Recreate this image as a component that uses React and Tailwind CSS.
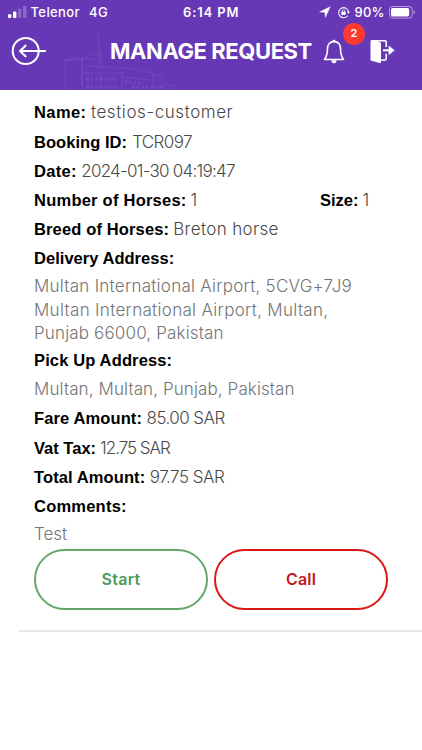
const bookingFields = [
  { label: "Name:", value: "testios-customer", labelClass: "tracking-[0.4px]", valueClass: "ml-[4.5px] tracking-[0.57px]" },
  { label: "Booking ID:", value: "TCR097", labelClass: "tracking-[0.05px]", valueClass: "ml-[5px] tracking-[-0.6px]" },
  { label: "Date:", value: "2024-01-30 04:19:47", labelClass: "tracking-[0.3px]", valueClass: "ml-[4.5px] tracking-[-0.75px]" },
];

const horseFields = [
  { label: "Breed of Horses:", value: "Breton horse", labelClass: "tracking-[0.14px]", valueClass: "ml-1 tracking-[0.35px]" },
  { label: "Delivery Address:", value: "", labelClass: "tracking-[0.03px]" },
];

const amountFields = [
  { label: "Fare Amount:", value: "85.00 SAR", labelClass: "tracking-[0.12px]", valueClass: "ml-[4.5px] tracking-[-0.57px]" },
  { label: "Vat Tax:", value: "12.75 SAR", labelClass: "", valueClass: "ml-1 tracking-[-1.02px]" },
  { label: "Total Amount:", value: "97.75 SAR", labelClass: "tracking-[0.1px]", valueClass: "ml-[4.5px] tracking-[-0.5px]" },
  { label: "Comments:", value: "", labelClass: "tracking-[0.22px]" },
];

const Field = ({ label, value, labelClass = "", valueClass = "ml-1" }) => (
  <div className="flex h-[29.2px] items-baseline leading-[29.2px] whitespace-nowrap">
    <span className={`font-['Liberation_Sans',Arial,sans-serif] text-[16.5px] font-bold text-black ${labelClass}`}>{label}</span>
    {value && <span className={`text-[17px] font-light text-[#484848] ${valueClass}`}>{value}</span>}
  </div>
);

const SignalIcon = () => (
  <svg width="19" height="12" viewBox="0 0 19 12" fill="#fff">
    <rect x="0" y="8.2" width="3.4" height="3.8" rx="0.8" />
    <rect x="5" y="5.6" width="3.4" height="6.4" rx="0.8" />
    <rect x="10" y="2.8" width="3.4" height="9.2" rx="0.8" opacity="0.25" />
    <rect x="15" y="0" width="3.4" height="12" rx="0.8" opacity="0.25" />
  </svg>
);

const LocationIcon = () => (
  <svg width="12" height="12" viewBox="0 0 12 12" fill="#fff">
    <path d="M11.2 0.7 6.4 11.3 5.9 6.3 0.7 5.9Z" stroke="#fff" strokeWidth="0.5" strokeLinejoin="round" />
  </svg>
);

const RotationLockIcon = () => (
  <svg width="13" height="13" viewBox="0 0 13 13" fill="none" stroke="#fff" strokeWidth="1.1">
    <path d="M10.4 10a5 5 0 1 1 1.2-4" strokeLinecap="round" />
    <path d="M9.8 5.8h3.1l-1.5 2.2Z" fill="#fff" stroke="none" />
    <rect x="4.4" y="5.8" width="4.2" height="3.2" rx="0.5" fill="#fff" stroke="none" />
    <path d="M5.2 6V5a1.3 1.3 0 0 1 2.6 0v1" strokeWidth="0.8" />
  </svg>
);

const BatteryIcon = () => (
  <svg width="27" height="13" viewBox="0 0 27 13" fill="none">
    <rect x="0.5" y="0.5" width="22.8" height="11.6" rx="3.2" stroke="#fff" strokeOpacity="0.5" />
    <rect x="2" y="2" width="18.2" height="8.6" rx="1.8" fill="#fff" />
    <path d="M24.6 4.3v4a2.2 2.2 0 0 0 0-4Z" fill="#fff" fillOpacity="0.5" />
  </svg>
);

const StatusBar = () => (
  <div className="relative flex h-6 items-center text-[13px] leading-6 font-medium whitespace-nowrap">
    <div className="flex w-[183px] items-center pl-[7.5px]">
      <SignalIcon />
      <span className="ml-1 tracking-[0.4px]">Telenor</span>
      <span className="ml-[9px] tracking-[0.4px]">4G</span>
    </div>
    <span className="w-[136px] font-semibold tracking-[0.85px]">6:14 PM</span>
    <LocationIcon />
    <span className="ml-[5.5px]"><RotationLockIcon /></span>
    <span className="ml-[5px] w-[34px] tracking-[0.2px]">90%</span>
    <BatteryIcon />
  </div>
);

const Skyline = () => (
  <svg className="absolute bottom-0 left-[60px]" width="130" height="58" viewBox="0 0 130 58" fill="none" stroke="#a78ae0" strokeOpacity="0.22" strokeWidth="0.8">
    <path d="M5 58V28L22 26V58M5 28h17M22 35V27h14v9M38.5 2v34M40.5 12v20M22 26l19-6v17M22 38l5-4 29 2 6 4M22 41h40M22 41v17M62 40v18M56 36h11l26 5v17M62 45l31 3M93 43l9 1v14M102 52l12 2v4M28 41v17M41 41v17" />
    <path d="M26 47h32M64 50h7M73 51h8M72 55h30M26 55h32" strokeWidth="3" strokeDasharray="3 1.5" strokeOpacity="0.18" />
  </svg>
);

const BackIcon = () => (
  <svg width="36" height="30" viewBox="0 0 36 30" fill="none" stroke="#fff" strokeWidth="2" strokeLinecap="round" strokeLinejoin="round">
    <circle cx="14.7" cy="15" r="13" />
    <path d="M34 15H9M14.5 9.7 9 15l5.5 5.3" strokeWidth="2.2" />
  </svg>
);

const BellIcon = () => (
  <svg width="22" height="25" viewBox="0 0 22 25" fill="none" stroke="#fff" strokeWidth="1.6" strokeLinejoin="round">
    <path d="M11 2.6c-4.6 0-6.5 3.2-6.5 7 0 6-.9 8.2-3 10.9h19c-2.1-2.7-3-4.9-3-10.9 0-3.8-1.9-7-6.5-7Z" />
    <path d="M9.5 2.6a1.5 1.5 0 0 1 3 0ZM8.8 21.7h4.4a2.2 2.2 0 0 1-4.4 0Z" fill="#fff" strokeWidth="0.8" />
  </svg>
);

const LogoutIcon = () => (
  <svg width="25" height="25" viewBox="0 0 25 25" fill="none" stroke="#fff">
    <path d="M0.5 2.4Q0.5 1 1.9 1H4.6l5.6 2.2q.8.4.8 1.4v18.4q0 1.4-1.3 1L1.4 21.8Q.5 21.4.5 20.4Z" fill="#fff" stroke="none" />
    <path d="M4 1.8h11q1.2 0 1.2 1.2v5M16.2 14.8v5q0 1.2-1.2 1.2H11" strokeWidth="1.6" />
    <path d="M13 11.3h6.5" strokeWidth="2" />
    <path d="M18.6 6.4 24.6 11.3 18.6 16.2Z" fill="#fff" stroke="none" />
  </svg>
);

const Header = () => (
  <header className="relative h-[90px] bg-[#6638b6] text-white">
    <Skyline />
    <StatusBar />
    <div className="relative flex h-[54px] items-center pl-[11px]">
      <BackIcon />
      <h1 className="ml-[63px] w-[213px] text-[22px] leading-none font-bold tracking-[-0.42px] whitespace-nowrap">MANAGE REQUEST</h1>
      <div className="relative">
        <BellIcon />
        <span className="absolute -top-[16px] left-[20px] flex size-[22px] items-center justify-center rounded-full bg-[#fd3b31] text-[11px] font-semibold">2</span>
      </div>
      <span className="ml-[25px]"><LogoutIcon /></span>
    </div>
  </header>
);

const App = () => (
  <div className="min-h-[750px] w-[422px] bg-white font-['Inter',sans-serif]">
    <Header />
    <main className="px-[34px] pt-[8.4px]">
      {bookingFields.map((field) => (
        <Field key={field.label} {...field} />
      ))}
      <div className="flex">
        <div className="w-[286px]">
          <Field label="Number of Horses:" value="1" labelClass="tracking-[0.24px]" />
        </div>
        <Field label="Size:" value="1" />
      </div>
      {horseFields.map((field) => (
        <Field key={field.label} {...field} />
      ))}
      <div className="pt-[1.6px] text-[17px] leading-[23.5px] font-light whitespace-nowrap text-[#747474]">
        <p className="tracking-[0.25px]">Multan International Airport, 5CVG+7J9</p>
        <p className="tracking-[0.31px]">Multan International Airport, Multan,</p>
        <p className="tracking-[0.15px]">Punjab 66000, Pakistan</p>
      </div>
      <Field label="Pick Up Address:" labelClass="tracking-[0.14px]" />
      <p className="text-[17px] leading-[29.6px] font-light tracking-[0.1px] text-[#747474]">Multan, Multan, Punjab, Pakistan</p>
      {amountFields.map((field) => (
        <Field key={field.label} {...field} />
      ))}
      <p className="text-[17px] leading-[27px] font-light text-[#747474]">Test</p>
      <div className="mt-[0.6px] flex gap-[6px]">
        <button className="h-[61px] w-[174px] rounded-full border-2 border-[#65a76b] font-semibold tracking-[0.3px] text-[#4b9c5d]">Start</button>
        <button className="h-[61px] w-[174px] rounded-full border-2 border-[#dc1717] font-semibold tracking-[0.2px] text-[#c01820]">Call</button>
      </div>
    </main>
    <div className="mt-[20.4px] ml-[19px] h-[2px] bg-[#e8e8e8]" />
  </div>
);

export default App;
